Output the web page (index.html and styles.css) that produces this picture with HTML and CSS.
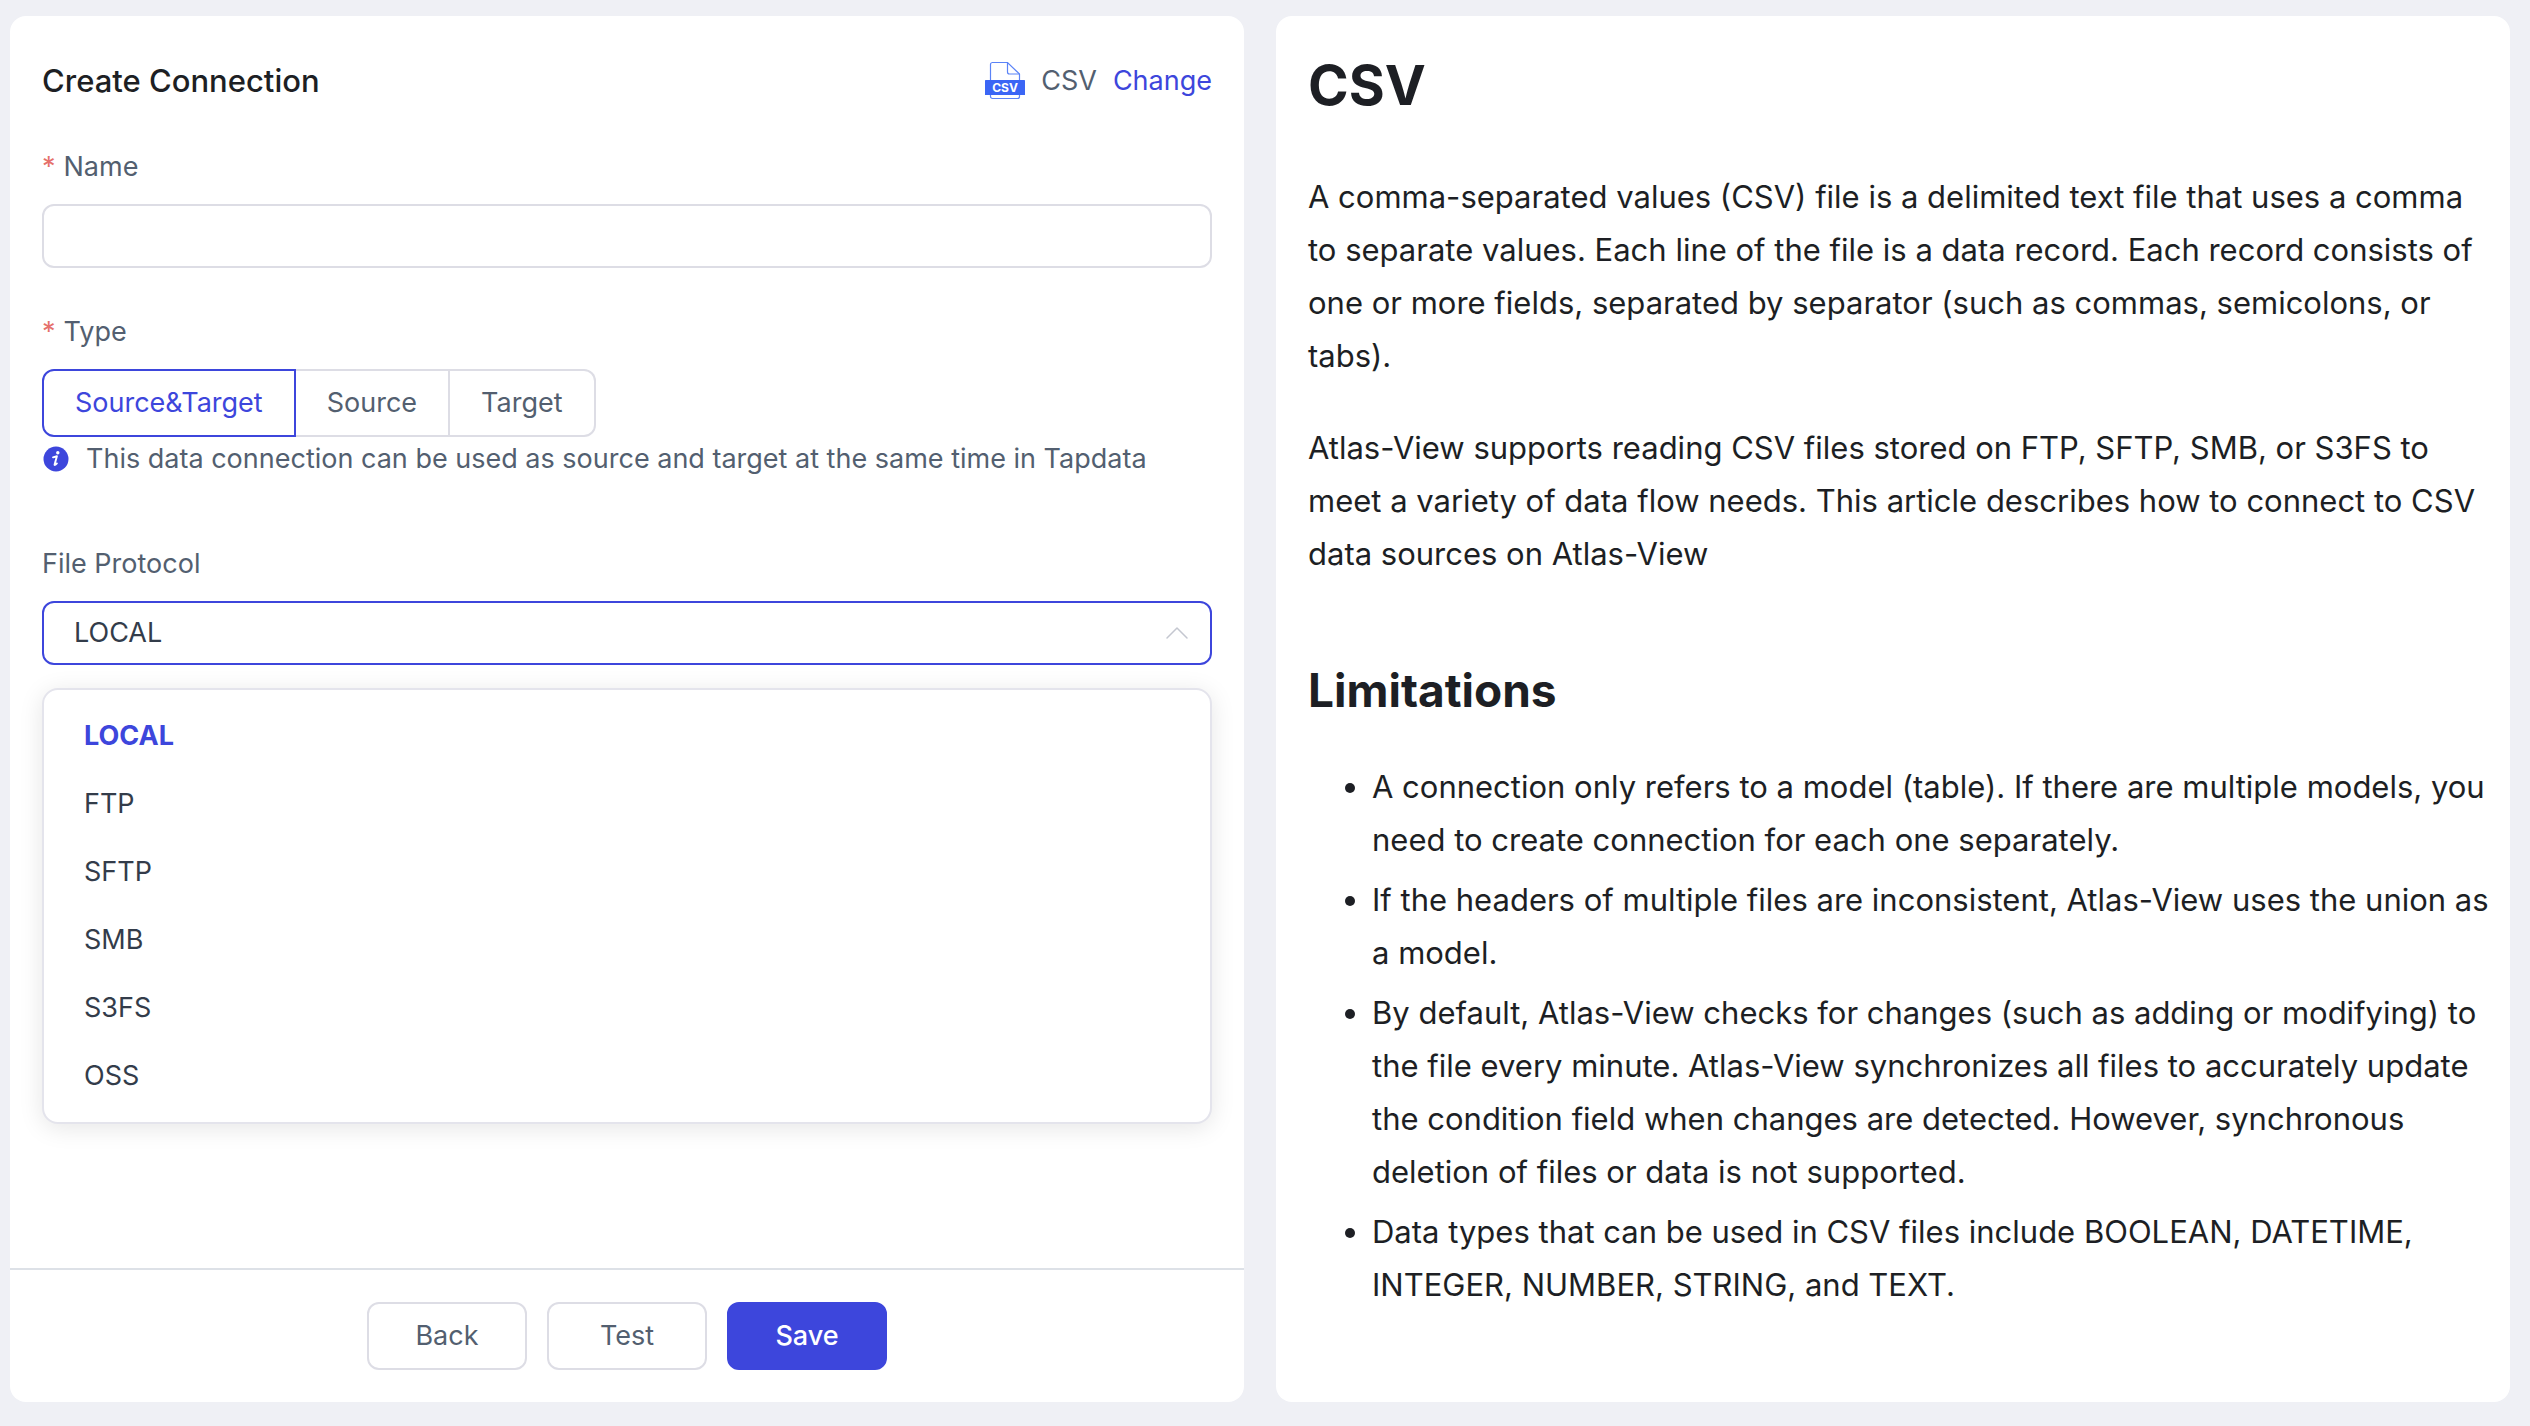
FILE: index.html
```html
<!DOCTYPE html>
<html lang="en">
<head>
<meta charset="utf-8">
<meta name="viewport" content="width=device-width, initial-scale=1">
<title>Create Connection</title>
<link rel="stylesheet" href="styles.css">
</head>
<body>
<main class="layout">
  <form class="card form-card">
    <div class="form-body">
      <header class="form-header">
        <h1 class="form-title">Create Connection</h1>
        <div class="source">
          <svg class="source-icon" viewBox="0 0 40 40" aria-hidden="true">
            <path d="M7 1.5H22.5L34.5 13V35.500a2 2 0 0 1-2 2H7.500a2 2 0 0 1-2-2V3.500a2 2 0 0 1 2-2z" fill="#fff" stroke="#5b83f7" stroke-width="1.200"/>
            <path d="M22.500 1.500V11a2 2 0 0 0 2 2h10" fill="none" stroke="#5b83f7" stroke-width="1.200"/>
            <rect x="0" y="19" width="40" height="15" rx=".6" fill="#3b66f5"/>
            <text x="20" y="31" text-anchor="middle" class="source-icon-text">CSV</text>
          </svg>
          <span>CSV</span>
          <a class="change" href="#change">Change</a>
        </div>
      </header>

      <div class="field">
        <label class="label required" for="name">Name</label>
        <input class="control" id="name" type="text" required>
      </div>

      <div class="field field-type">
        <span class="label required" id="type-label">Type</span>
        <div class="segments" role="group" aria-labelledby="type-label">
          <button class="segment active" type="button" aria-pressed="true">Source&amp;Target</button>
          <button class="segment" type="button" aria-pressed="false">Source</button>
          <button class="segment" type="button" aria-pressed="false">Target</button>
        </div>
        <p class="hint">
          <svg class="hint-icon" viewBox="0 0 26 26" aria-hidden="true">
            <circle cx="13" cy="13" r="12.500" fill="#3d46dc"/>
            <circle cx="14.800" cy="6.800" r="1.700" fill="#fff"/>
            <path d="M10 11.300c1.500-.5 2.800-.9 3.900-1.100l-2.300 8.200c-.2.900.5.800 2.300-1" fill="none" stroke="#fff" stroke-width="1.900" stroke-linecap="round" stroke-linejoin="round"/>
          </svg>
          <span>This data connection can be used as source and target at the same time in Tapdata</span>
        </p>
      </div>

      <div class="field">
        <label class="label" for="protocol">File Protocol</label>
        <div class="select-wrap">
          <select class="control select" id="protocol">
            <option selected>LOCAL</option>
            <option>FTP</option>
            <option>SFTP</option>
            <option>SMB</option>
            <option>S3FS</option>
            <option>OSS</option>
          </select>
          <svg class="chevron" viewBox="0 0 24 24" aria-hidden="true"><path d="M2 17 12 7l10 10" fill="none" stroke="#c4c7d0" stroke-width="1.500" stroke-linecap="round" stroke-linejoin="round"/></svg>
          <ul class="dropdown" role="listbox" aria-label="File Protocol">
            <li class="option selected" role="option" aria-selected="true">LOCAL</li>
            <li class="option" role="option">FTP</li>
            <li class="option" role="option">SFTP</li>
            <li class="option" role="option">SMB</li>
            <li class="option" role="option">S3FS</li>
            <li class="option" role="option">OSS</li>
          </ul>
        </div>
      </div>
    </div>
    <footer class="form-footer">
      <button class="button" type="button">Back</button>
      <button class="button" type="button">Test</button>
      <button class="button primary" type="submit">Save</button>
    </footer>
  </form>

  <article class="card doc">
    <h1>CSV</h1>
    <p>A comma-separated values (CSV) file is a delimited text file that uses a comma to separate values. Each line of the file is a data record. Each record consists of one or more fields, separated by separator (such as commas, semicolons, or tabs).</p>
    <p>Atlas-View supports reading CSV files stored on FTP, SFTP, SMB, or S3FS to meet a variety of data flow needs. This article describes how to connect to CSV data sources on Atlas-View</p>
    <h2>Limitations</h2>
    <ul>
      <li>A connection only refers to a model (table). If there are multiple models, you need to create connection for each one separately.</li>
      <li>If the headers of multiple files are inconsistent, Atlas-View uses the union as a model.</li>
      <li>By default, Atlas-View checks for changes (such as adding or modifying) to the file every minute. Atlas-View synchronizes all files to accurately update the condition field when changes are detected. However, synchronous deletion of files or data is not supported.</li>
      <li>Data types that can be used in CSV files include BOOLEAN, DATETIME, INTEGER, NUMBER, STRING, and TEXT.</li>
    </ul>
  </article>
</main>
</body>
</html>
```

FILE: styles.css
```css
:root {
  --primary: #3d46dc;
  --border: #dddde5;
  --text: #1d1f24;
  --text-muted: #535f70;
  --page: #eff0f5;
}

* {
  box-sizing: border-box;
}

body {
  margin: 0;
  background: var(--page);
  color: var(--text);
  font: 27px/40px Inter, "Liberation Sans", sans-serif;
}

h1, h2, p, ul {
  margin: 0;
}

button, input, select {
  font: inherit;
}

.layout {
  display: grid;
  grid-template-columns: 1fr 1fr;
  gap: 32px;
  min-height: 100vh;
  padding: 16px 20px 24px 10px;
}

.card {
  background: #fff;
  border-radius: 16px;
}

/* Connection form */
.form-card {
  display: flex;
  flex-direction: column;
  color: var(--text-muted);
}

.form-body {
  flex: 1;
  padding: 40px 32px;
}

.form-header {
  display: flex;
  align-items: center;
  justify-content: space-between;
  height: 50px;
  margin-bottom: 41px;
}

.form-title {
  color: var(--text);
  font-size: 31px;
  font-weight: 500;
}

.source {
  display: flex;
  align-items: center;
  gap: 16px;
}

.source-icon {
  width: 40px;
  height: 40px;
}

.source-icon-text {
  fill: #fff;
  font-size: 12px;
  font-weight: 700;
}

.change {
  color: var(--primary);
  text-decoration: none;
}

.field {
  margin-bottom: 44px;
}

.field-type {
  margin-bottom: 65px;
}

.label {
  display: block;
  margin-bottom: 17px;
}

.required::before {
  content: "*";
  margin-right: 8px;
  color: #e5706b;
}

.control {
  display: block;
  width: 100%;
  height: 64px;
  padding: 0 30px;
  border: 2px solid var(--border);
  border-radius: 12px;
  background: #fff;
  color: #333c4a;
  outline: none;
}

.segments {
  display: flex;
}

.segment {
  height: 68px;
  padding: 0 31px;
  border: 2px solid var(--border);
  border-left-width: 0;
  background: #fff;
  color: inherit;
}

.segment:first-child {
  border-left-width: 2px;
  border-radius: 12px 0 0 12px;
}

.segment:last-child {
  border-radius: 0 12px 12px 0;
}

.segment.active {
  border-color: var(--primary);
  color: var(--primary);
}

.hint {
  display: flex;
  align-items: center;
  gap: 17px;
  padding: 2px 0 0 1px;
}

.hint-icon {
  flex: none;
  width: 26px;
  height: 26px;
}

.select-wrap {
  position: relative;
}

.select {
  border-color: var(--primary);
  appearance: none;
}

.chevron {
  position: absolute;
  top: 20px;
  right: 23px;
  width: 24px;
  height: 24px;
  pointer-events: none;
}

.dropdown {
  position: absolute;
  top: 100%;
  right: 0;
  left: 0;
  margin-top: 23px;
  padding: 12px 0;
  border: 2px solid #e4e4ec;
  border-radius: 16px;
  background: #fff;
  box-shadow: 0 4px 24px rgba(0, 0, 0, 0.1);
  list-style: none;
}

.option {
  padding: 0 40px;
  color: #333c4a;
  line-height: 68px;
}

.option.selected {
  color: var(--primary);
  font-weight: 700;
}

.form-footer {
  display: flex;
  justify-content: center;
  gap: 20px;
  padding: 32px;
  border-top: 2px solid #dde1e7;
}

.button {
  width: 160px;
  height: 68px;
  border: 2px solid var(--border);
  border-radius: 12px;
  background: #fff;
  color: inherit;
}

.button.primary {
  border-color: var(--primary);
  background: var(--primary);
  color: #fff;
  font-weight: 500;
}

/* Connector documentation */
.doc {
  padding: 32px 20px 32px 32px;
  font-size: 31px;
  line-height: 53px;
}

.doc h1 {
  margin-bottom: 48px;
  font-size: 55px;
  font-weight: 700;
  line-height: 74px;
}

.doc p {
  margin-bottom: 39px;
}

.doc h2 {
  margin: 80px 0 40px;
  font-size: 46px;
  font-weight: 700;
  line-height: 60px;
}

.doc ul {
  padding-left: 64px;
}

.doc li + li {
  margin-top: 7px;
}
```
